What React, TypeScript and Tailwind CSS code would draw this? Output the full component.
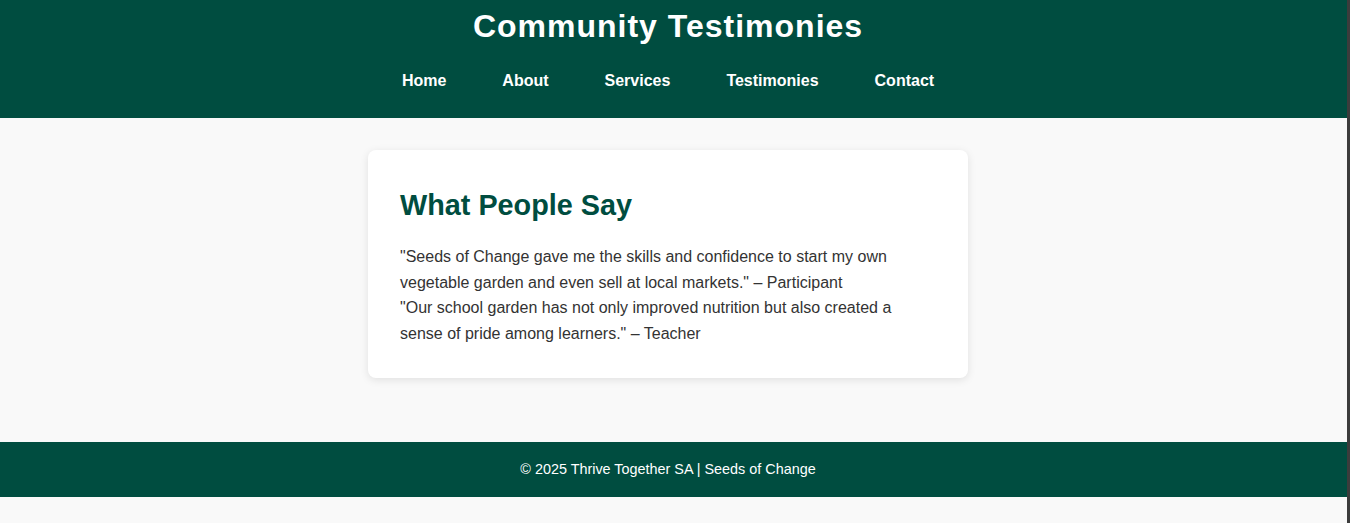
import React from "react";

const links = ["Home", "About", "Services", "Testimonies", "Contact"];

export default function App() {
    return (
        <div className="flex min-h-screen bg-[#f9f9f9] font-['Liberation_Sans',Arial,sans-serif]">
            <div className="flex-1 flex flex-col">
                <header className="bg-[#004d40] text-white flex flex-col items-center pt-[8px] pb-[28px] pr-[11px]">
                    <h1 className="text-[32px] leading-[37px] font-bold tracking-[1px]">Community Testimonies</h1>
                    <nav className="mt-[27px] flex gap-[56px]">
                        {links.map((l) => (
                            <a key={l} href="#" className="text-white font-bold text-[16px] leading-[18px]">
                                {l}
                            </a>
                        ))}
                    </nav>
                </header>

                <main className="flex justify-center pt-[32px] pb-[64px] pr-[11px]">
                    <section className="w-[600px] bg-white rounded-lg shadow-[0_2px_8px_rgba(0,0,0,0.1)] px-[32px] pt-[39px] pb-[32px]">
                        <h2 className="text-[#004d40] text-[28.8px] leading-[32px] font-bold mb-[23px]">What People Say</h2>
                        <p className="text-[#333] text-[16px] leading-[25.6px]">
                            "Seeds of Change gave me the skills and confidence to start my own vegetable garden and even sell at local markets." – Participant
                        </p>
                        <p className="text-[#333] text-[16px] leading-[25.6px]">
                            "Our school garden has not only improved nutrition but also created a sense of pride among learners." – Teacher
                        </p>
                    </section>
                </main>

                <footer className="bg-[#004d40] text-white text-[14.4px] h-[55px] flex items-center justify-center pr-[11px]">
                    © 2025 Thrive Together SA | Seeds of Change
                </footer>
            </div>
            <div className="w-[3px] bg-[#3c3c3c]" />
        </div>
    );
}
